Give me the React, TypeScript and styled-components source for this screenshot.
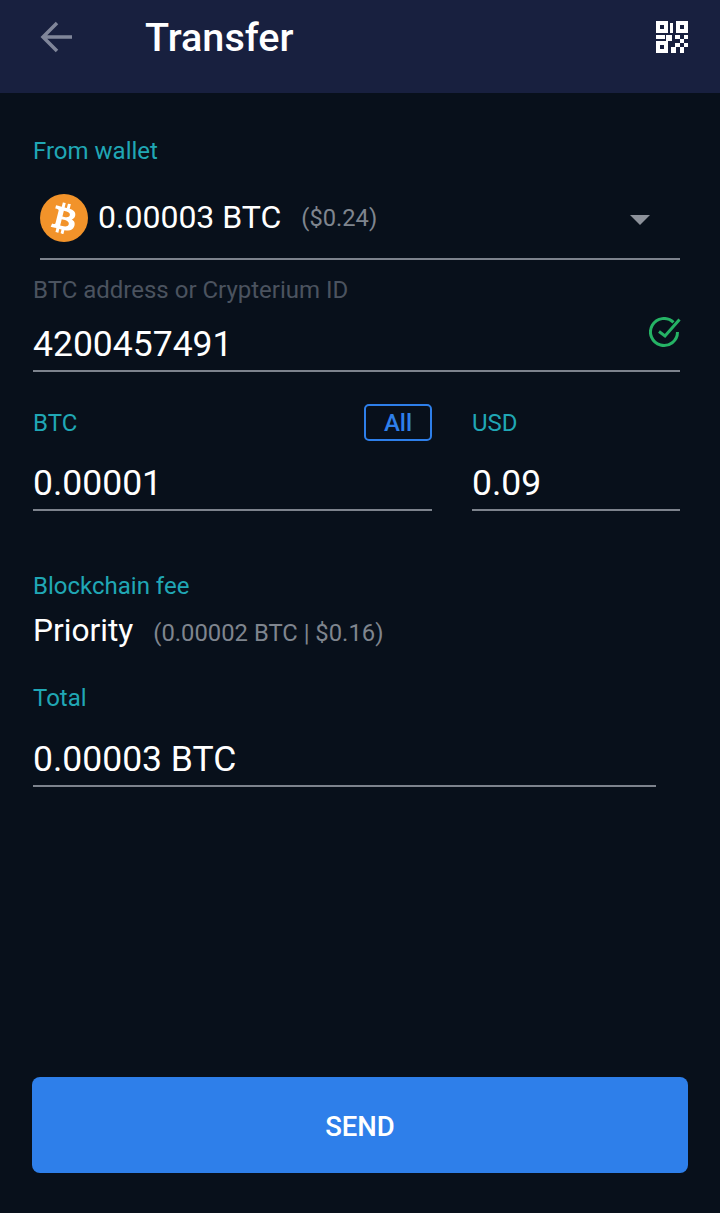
import React from 'react';
import styled, { createGlobalStyle } from 'styled-components';
import { FaBtc } from 'react-icons/fa';

const GlobalStyle = createGlobalStyle`
  html, body {
    margin: 0;
    padding: 0;
    background: #08101b;
  }
  * {
    box-sizing: border-box;
  }
`;

const Screen = styled.div`
  display: flex;
  flex-direction: column;
  width: 720px;
  height: 1213px;
  background: #08101b;
  font-family: Roboto, "Liberation Sans", sans-serif;
  overflow: hidden;
`;

const Header = styled.div`
  display: flex;
  align-items: center;
  height: 93px;
  flex-shrink: 0;
  padding: 0 32px 19px 40px;
  background: #18203f;
`;

const BackButton = styled.svg`
  width: 33px;
  height: 32px;
  display: block;
`;

const Title = styled.div`
  margin: 2px 0 0 72px;
  flex: 1;
  font-size: 39.6px;
  font-weight: 500;
  line-height: 44px;
  color: #fff;
`;

const QrIcon = styled.svg`
  width: 32px;
  height: 32px;
  display: block;
`;

const Body = styled.div`
  display: flex;
  flex-direction: column;
  flex: 1;
  padding: 44px 40px 40px 33px;
`;

const Label = styled.div<{ $muted?: boolean }>`
  font-size: 24px;
  line-height: 28px;
  color: ${p => (p.$muted ? '#4b535f' : '#20a7b5')};
`;

const WalletRow = styled.div`
  display: flex;
  align-items: center;
  height: 95px;
  margin-left: 7px;
  padding: 13px 30px 0 0;
  border-bottom: 2px solid #7d838d;
`;

const Coin = styled.div`
  display: flex;
  align-items: center;
  justify-content: center;
  width: 48px;
  height: 48px;
  border-radius: 50%;
  background: #f2932a;
  color: #fff;
  font-size: 31px;

  svg {
    transform: rotate(14deg);
  }
`;

const WalletAmount = styled.div`
  margin: 0 0 2px 10px;
  font-size: 32px;
  line-height: 38px;
  color: #fff;
`;

const WalletFiat = styled.div`
  margin-left: 20px;
  flex: 1;
  font-size: 23.7px;
  line-height: 30px;
  color: #7f858e;
`;

const Caret = styled.div`
  width: 0;
  height: 0;
  margin-top: 4px;
  border-left: 10px solid transparent;
  border-right: 10px solid transparent;
  border-top: 10px solid #8c919a;
`;

const AddressLabel = styled(Label)`
  margin-top: 16px;
`;

const Field = styled.div<{ $width?: number; $height: number }>`
  display: flex;
  align-items: flex-end;
  justify-content: space-between;
  height: ${p => p.$height}px;
  width: ${p => (p.$width ? `${p.$width}px` : 'auto')};
  padding-bottom: 5px;
  border-bottom: 2px solid #7d838d;
`;

const FieldValue = styled.div`
  font-size: 35.5px;
  line-height: 42px;
  color: #fff;
`;

const CheckIcon = styled.svg`
  align-self: flex-start;
  width: 32px;
  height: 32px;
  margin: 13px -1px 0 0;
  display: block;
`;

const AmountRow = styled.div`
  display: flex;
  gap: 40px;
  margin-top: 32px;
`;

const AmountColumn = styled.div<{ $width: number }>`
  display: flex;
  flex-direction: column;
  width: ${p => p.$width}px;
`;

const AmountHead = styled.div`
  display: flex;
  align-items: center;
  justify-content: space-between;
  height: 37px;
`;

const AllButton = styled.div`
  display: flex;
  align-items: center;
  justify-content: center;
  width: 68px;
  height: 37px;
  border: 2px solid #2e7fea;
  border-radius: 5px;
  font-size: 24px;
  font-weight: 500;
  color: #2e7fea;
`;

const FeeLabel = styled(Label)`
  margin-top: 61px;
`;

const FeeRow = styled.div`
  display: flex;
  align-items: baseline;
  margin-top: 12px;
`;

const FeeName = styled.div`
  font-size: 31.7px;
  line-height: 38px;
  color: #fff;
`;

const FeeDetail = styled.div`
  margin-left: 20px;
  font-size: 23.8px;
  color: #7f858e;
`;

const TotalLabel = styled(Label)`
  margin-top: 34px;
`;

const SendButton = styled.div`
  display: flex;
  align-items: center;
  justify-content: center;
  height: 96px;
  margin: auto -8px 0 -1px;
  padding-top: 3px;
  border-radius: 8px;
  background: #2e7fea;
  font-size: 27.5px;
  font-weight: 500;
  color: #fff;
`;

function Qr() {
  return (
    <QrIcon viewBox="0 0 32 32" shapeRendering="crispEdges" fill="#fff" fillRule="evenodd">
      <path d="M0 0h12v12H0zM4 4v4h4V4z" />
      <path d="M20 0h12v12H20zM24 4v4h4V4z" />
      <path d="M0 20h12v12H0zM4 24v4h4V24z" />
      <path d="M14 2h3v10h-3z" />
      <path d="M0 14h9v4H0zM10 14h6v6h-6z" />
      <path d="M19 14h5v4h-5zM28 14h4v4h-4zM24 18h4v4h-4zM19 22h5v4h-5zM28 22h4v4h-4zM15 26h5v6h-5zM24 26h4v6h-4z" />
    </QrIcon>
  );
}

function App() {
  return (
    <>
      <GlobalStyle />
      <Screen>
        <Header>
          <BackButton viewBox="0 0 33 32" fill="none" stroke="#80869a" strokeWidth="3.5">
            <path d="M32 16H3M17 2L3 16l14 14" />
          </BackButton>
          <Title>Transfer</Title>
          <Qr />
        </Header>
        <Body>
          <Label>From wallet</Label>
          <WalletRow>
            <Coin>
              <FaBtc />
            </Coin>
            <WalletAmount>0.00003 BTC</WalletAmount>
            <WalletFiat>($0.24)</WalletFiat>
            <Caret />
          </WalletRow>
          <AddressLabel $muted>BTC address or Crypterium ID</AddressLabel>
          <Field $height={68}>
            <FieldValue>4200457491</FieldValue>
            <CheckIcon viewBox="0 0 32 32" fill="none" stroke="#25b365" strokeWidth="3">
              <path d="M24.5 5.4A13.5 13.5 0 1 0 28.5 15" />
              <path d="M10 14.5l6 4.5L30.5 2.5" />
            </CheckIcon>
          </Field>
          <AmountRow>
            <AmountColumn $width={399}>
              <AmountHead>
                <Label>BTC</Label>
                <AllButton>All</AllButton>
              </AmountHead>
              <Field $height={70}>
                <FieldValue>0.00001</FieldValue>
              </Field>
            </AmountColumn>
            <AmountColumn $width={208}>
              <AmountHead>
                <Label>USD</Label>
              </AmountHead>
              <Field $height={70}>
                <FieldValue>0.09</FieldValue>
              </Field>
            </AmountColumn>
          </AmountRow>
          <FeeLabel>Blockchain fee</FeeLabel>
          <FeeRow>
            <FeeName>Priority</FeeName>
            <FeeDetail>(0.00002 BTC | $0.16)</FeeDetail>
          </FeeRow>
          <TotalLabel>Total</TotalLabel>
          <Field $width={623} $height={75}>
            <FieldValue>0.00003 BTC</FieldValue>
          </Field>
          <SendButton>SEND</SendButton>
        </Body>
      </Screen>
    </>
  );
}

export default App;
